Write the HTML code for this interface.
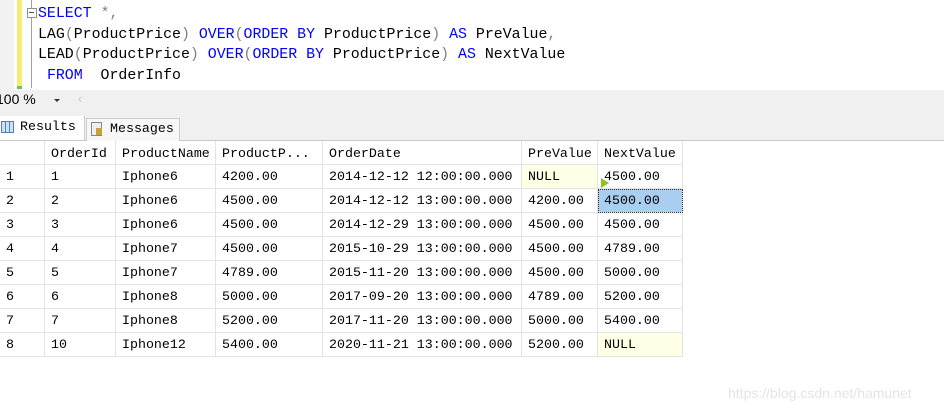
<!DOCTYPE html>
<html><head><style>
body{margin:0;width:944px;height:412px;background:#fff;position:relative;overflow:hidden;font-family:"Liberation Mono",monospace}
.a{position:absolute}
.code{font-size:14.9px;line-height:20.7px;white-space:pre;color:#000}
.k{color:#0000ff}.g{color:#808080}
table{border-collapse:collapse;font-size:13.3px;position:absolute;left:0;top:141px}
td{height:23px;border:1px solid #e3e3e3;padding:0 0 0 6px;white-space:nowrap;border-top:none}
tr:first-child td{border-top:1px solid #fff;height:22px}
tr td:first-child{border-left:none}
</style></head><body>
<div class="a" style="left:0;top:0;width:14px;height:90px;background:#f2f2f2"></div>
<div class="a" style="left:17px;top:0;width:5px;height:86px;background:#f8ec70"></div>
<div class="a" style="left:17px;top:86px;width:5px;height:3px;background:#6ac36a"></div>
<div class="a" style="left:31px;top:0;width:1px;height:88px;background:#a0a0a0"></div>
<div class="a" style="left:27px;top:8px;width:8px;height:8px;border:1px solid #909090;background:#fff"></div>
<div class="a" style="left:29px;top:12px;width:5px;height:1px;background:#555"></div>
<div class="a code" style="left:38px;top:4px"><span class="k">SELECT</span> <span class="g">*,</span>
LAG<span class="g">(</span>ProductPrice<span class="g">)</span> <span class="k">OVER</span><span class="g">(</span><span class="k">ORDER BY</span> ProductPrice<span class="g">)</span> <span class="k">AS</span> PreValue<span class="g">,</span>
LEAD<span class="g">(</span>ProductPrice<span class="g">)</span> <span class="k">OVER</span><span class="g">(</span><span class="k">ORDER BY</span> ProductPrice<span class="g">)</span> <span class="k">AS</span> NextValue
 <span class="k">FROM</span>  OrderInfo</div>
<div class="a" style="left:0;top:90px;width:944px;height:50px;background:#f0f0f0;border-bottom:1px solid #c8c8c8"></div>
<div class="a" style="left:-4px;top:91px;font-family:'Liberation Sans',sans-serif;font-size:14px">100 %</div>
<div class="a" style="left:54px;top:99px;border:3px solid transparent;border-top:3px solid #333"></div>
<div class="a" style="left:76px;top:92px;color:#ccc;font-size:14px">‹</div>
<div class="a" style="left:0;top:116px;width:84px;height:24px;background:#fff;border-right:1px solid #ccc"></div>
<div class="a" style="left:1px;top:121px;width:11px;height:10px;border:1px solid #5a7eb0;background:repeating-linear-gradient(90deg,#cfe0f5 0 3px,#5a7eb0 3px 4px)"></div>
<div class="a" style="left:20px;top:119px;font-size:13.3px">Results</div>
<div class="a" style="left:86px;top:118px;width:92px;height:22px;background:#f7f7f7;border:1px solid #ccc;border-bottom:none"></div>
<div class="a" style="left:91px;top:122px;width:9px;height:12px;border:1px solid #888;background:#eee"></div>
<div class="a" style="left:96px;top:128px;width:6px;height:7px;background:#c9a040"></div>
<div class="a" style="left:110px;top:121px;font-size:13.3px">Messages</div>
<table>
<tr><td style="width:38px"></td><td style="width:64px">OrderId</td><td style="width:93px">ProductName</td><td style="width:100px">ProductP...</td><td style="width:192px">OrderDate</td><td style="width:69px">PreValue</td><td style="width:78px">NextValue</td></tr>
<tr><td>1</td><td>1</td><td>Iphone6</td><td>4200.00</td><td>2014-12-12 12:00:00.000</td><td style="background:#ffffe6">NULL</td><td>4500.00</td></tr>
<tr><td>2</td><td>2</td><td>Iphone6</td><td>4500.00</td><td>2014-12-12 13:00:00.000</td><td>4200.00</td><td style="background:#a9cef0;outline:1px dotted #333;outline-offset:-1px">4500.00</td></tr>
<tr><td>3</td><td>3</td><td>Iphone6</td><td>4500.00</td><td>2014-12-29 13:00:00.000</td><td>4500.00</td><td>4500.00</td></tr>
<tr><td>4</td><td>4</td><td>Iphone7</td><td>4500.00</td><td>2015-10-29 13:00:00.000</td><td>4500.00</td><td>4789.00</td></tr>
<tr><td>5</td><td>5</td><td>Iphone7</td><td>4789.00</td><td>2015-11-20 13:00:00.000</td><td>4500.00</td><td>5000.00</td></tr>
<tr><td>6</td><td>6</td><td>Iphone8</td><td>5000.00</td><td>2017-09-20 13:00:00.000</td><td>4789.00</td><td>5200.00</td></tr>
<tr><td>7</td><td>7</td><td>Iphone8</td><td>5200.00</td><td>2017-11-20 13:00:00.000</td><td>5000.00</td><td>5400.00</td></tr>
<tr><td>8</td><td>10</td><td>Iphone12</td><td>5400.00</td><td>2020-11-21 13:00:00.000</td><td>5200.00</td><td style="background:#ffffe6">NULL</td></tr>
</table>
<div class="a" style="left:601px;top:178px;border-left:8px solid #8ac41a;border-top:5px solid transparent;border-bottom:5px solid transparent"></div>
<div class="a" style="left:728px;top:385px;font-family:'Liberation Sans',sans-serif;font-size:14px;color:#e4e4e4">https://blog.csdn.net/hamunet</div>
</body></html>
